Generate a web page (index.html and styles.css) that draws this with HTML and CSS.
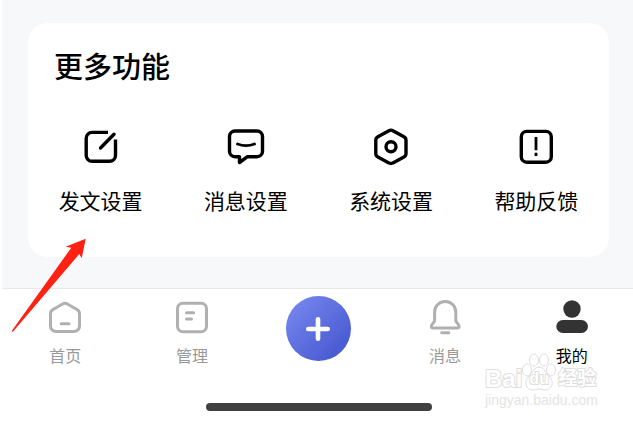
FILE: index.html
```html
<!DOCTYPE html>
<html lang="zh-CN">
<head>
    <meta charset="UTF-8">
    <meta name="viewport" content="width=device-width, initial-scale=1.0">
    <title>我的</title>
    <link rel="stylesheet" href="styles.css">
</head>
<body>

    <div class="screen">
        <main class="content">
            <section class="card">
                <h2>更多功能</h2>
                <div class="functions">
                    <a href="#" class="function">
                        <svg class="icon" viewBox="0 0 40 40">
                            <path d="M27 5.4H11a5.8 5.8 0 0 0-5.8 5.8v17.3a5.8 5.8 0 0 0 5.8 5.8h17.7a5.8 5.8 0 0 0 5.8-5.8V12.5" stroke-linecap="butt"/>
                            <path d="M19.5 21L33 7.3"/>
                        </svg>
                        <span>发文设置</span>
                    </a>
                    <a href="#" class="function">
                        <svg class="icon" viewBox="0 0 40 40">
                            <path d="M9 4h22a5.5 5.5 0 0 1 5.5 5.5v14.7a5.5 5.5 0 0 1-5.5 5.5H21.5L13.5 35.5V29.7H9a5.5 5.5 0 0 1-5.5-5.5V9.5A5.5 5.5 0 0 1 9 4z"/>
                            <path d="M11.5 17q8.5 3.4 17 0" stroke-width="2.8"/>
                        </svg>
                        <span>消息设置</span>
                    </a>
                    <a href="#" class="function">
                        <svg class="icon" viewBox="0 0 40 40">
                            <path d="M17.9 3.7a4 4 0 0 1 4 0l11 6a4 4 0 0 1 2.1 3.5v13.2a4 4 0 0 1-2.1 3.5l-11 6a4 4 0 0 1-4 0l-11-6a4 4 0 0 1-2.1-3.5V13.2a4 4 0 0 1 2.1-3.5z"/>
                            <circle cx="20" cy="19.7" r="5"/>
                        </svg>
                        <span>系统设置</span>
                    </a>
                    <a href="#" class="function">
                        <svg class="icon" viewBox="0 0 40 40">
                            <rect x="5.3" y="4.4" width="30" height="30.8" rx="5.5"/>
                            <path d="M20 10v13.3M20 25.8v3.2" stroke-width="2.8" stroke-linecap="butt"/>
                        </svg>
                        <span>帮助反馈</span>
                    </a>
                </div>
            </section>
        </main>

        <nav class="tabbar">
            <div class="tabs">
                <a href="#" class="tab">
                    <svg class="tab-icon" viewBox="0 0 36 36">
                        <path d="M15.6 4a5 5 0 0 1 4.8 0l9.6 5.5a5 5 0 0 1 2.5 4.3V26a5.5 5.5 0 0 1-5.5 5.5H9A5.5 5.5 0 0 1 3.5 26V13.8A5 5 0 0 1 6 9.5z"/>
                        <path d="M14.2 23.7h7.8"/>
                    </svg>
                    <span>首页</span>
                </a>
                <a href="#" class="tab">
                    <svg class="tab-icon" viewBox="0 0 36 36">
                        <rect x="3.5" y="3.2" width="29" height="28.5" rx="5.5"/>
                        <path d="M12.5 12.7h7M12.5 19h5"/>
                    </svg>
                    <span>管理</span>
                </a>
                <div class="tab tab-add">
                    <button type="button" class="add" aria-label="发布">
                        <svg viewBox="0 0 24 24">
                            <path d="M12 2.3v19.4M2.3 12h19.4"/>
                        </svg>
                    </button>
                </div>
                <a href="#" class="tab">
                    <svg class="tab-icon" viewBox="0 0 36 36">
                        <path d="M7.6 12a10.6 10.6 0 0 1 21.2 0v8.5c0 2 3.3 3.5 3.3 5.8 0 1.1-.7 1.7-1.8 1.7H6.1c-1.1 0-1.8-.6-1.8-1.7 0-2.3 3.3-3.8 3.3-5.8z"/>
                        <path d="M14.7 32.7h7"/>
                    </svg>
                    <span>消息</span>
                </a>
                <a href="#" class="tab active">
                    <svg class="tab-icon" viewBox="0 0 36 36">
                        <circle cx="18" cy="9" r="8.7"/>
                        <rect x="2.3" y="20" width="31.7" height="13" rx="6.5"/>
                    </svg>
                    <span>我的</span>
                </a>
            </div>
            <div class="home-bar"></div>

            <div class="watermark">
                <div class="brand">
                    <span>Bai</span>
                    <span class="paw">
                        <svg viewBox="0 0 34 38">
                            <ellipse cx="5" cy="17" rx="4.5" ry="6"/>
                            <ellipse cx="12" cy="7" rx="4.5" ry="6"/>
                            <ellipse cx="22" cy="7" rx="4.5" ry="6"/>
                            <ellipse cx="29" cy="17" rx="4.5" ry="6"/>
                            <path d="M17 14c5 0 6 5 10 9 6 6 3 14-4 14-2 0-4-1-6-1s-4 1-6 1c-7 0-10-8-4-14 4-4 5-9 10-9z"/>
                        </svg>
                        <em>du</em>
                    </span>
                    <span class="cn">经验</span>
                </div>
                <div class="site">jingyan.baidu.com</div>
            </div>
        </nav>

        <!-- 指向“发文设置”的箭头 -->
        <svg class="arrow" viewBox="0 0 76 96">
            <path d="M75.7 .7L55.7 8.7L61.3 9.7L1.7 93L2.7 94L69.3 16L71.7 20.3z"/>
        </svg>
    </div>

</body>
</html>
```
FILE: styles.css
```css
* { box-sizing: border-box; }
body { margin: 0; background: #fff; color: #000; font-family: "Noto Sans CJK SC", sans-serif; overflow: hidden; }
a { color: inherit; text-decoration: none; }
svg { display: block; fill: none; stroke: currentColor; stroke-linecap: round; stroke-linejoin: round; }

.screen { position: relative; width: 100%; min-height: 100vh; margin-left: 2px; }
.content { padding: 23px 26px 31px; background: #f6f8fa; }

.card { background: #fff; border-radius: 20px; padding: 22px 0 43px; }
h2 { margin: 0 0 42px; padding: 0 26px; font-size: 29px; line-height: 40px; font-weight: 500; }
.functions { display: grid; grid-template-columns: repeat(4, 1fr); }
.function { display: flex; flex-direction: column; align-items: center; gap: 19px; font-size: 21px; line-height: 28px; }
.icon { width: 40px; height: 40px; stroke-width: 3.4; }

.tabbar { position: relative; border-top: 1px solid #e6e8eb; background: #fff; padding-top: 11px; }
.tabs { display: grid; grid-template-columns: repeat(5, 1fr); }
.tab { display: flex; flex-direction: column; align-items: center; gap: 9px; height: 67px; color: #999; font-size: 16px; line-height: 20px; }
.tab-icon { width: 36px; height: 36px; color: #b0b0b0; stroke-width: 3; }
.active { color: #000; }
.active .tab-icon { color: #333; fill: currentColor; stroke: none; }
.tab-add { margin-top: -4px; }
.add { width: 65px; height: 65px; flex: none; padding: 0; border: none; border-radius: 50%; background: linear-gradient(135deg, #7a8bf0, #4052cc); color: #fff; display: flex; align-items: center; justify-content: center; cursor: pointer; }
.add svg { width: 24px; height: 24px; stroke-width: 4.6; }

.home-bar { width: 226px; height: 8px; margin: 36px auto 0; border-radius: 4px; background: #404040; }

.arrow { position: absolute; left: 8px; top: 238px; width: 76px; height: 96px; fill: #ff2113; stroke: none; }

/* 水印 */
.watermark { position: absolute; right: 34px; top: 64px; width: 116px; color: #fff; font-family: "Liberation Sans", "Noto Sans CJK SC", sans-serif; font-weight: bold; pointer-events: none; }
.brand { display: flex; align-items: flex-end; font-size: 24px; line-height: 24px; -webkit-text-stroke: 2px #dedede; paint-order: stroke fill; }
.paw { position: relative; width: 34px; height: 38px; }
.paw svg { width: 34px; height: 38px; stroke: #dedede; stroke-width: 1; overflow: visible; }
.paw em { position: absolute; left: 7px; bottom: 4px; font-size: 16px; line-height: 16px; font-style: normal; }
.cn { margin-left: 2px; font-size: 19px; }
.site { margin-top: 1px; font-size: 14px; line-height: 16px; font-weight: normal; color: #e4e4e4; }
```
